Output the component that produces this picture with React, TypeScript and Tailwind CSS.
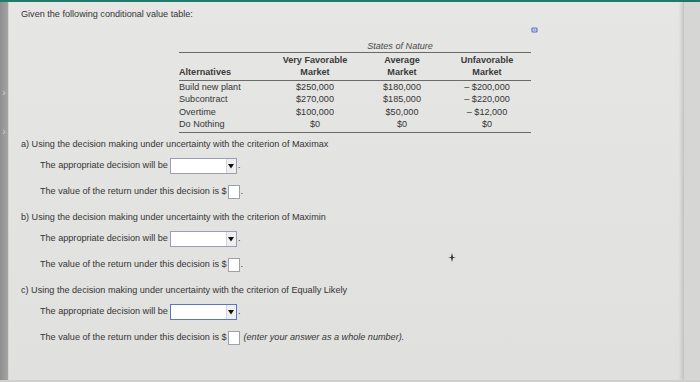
import React from 'react';

const rows = [
  { name: 'Build new plant', vf: '$250,000', avg: '$180,000', unf: '– $200,000' },
  { name: 'Subcontract', vf: '$270,000', avg: '$185,000', unf: '– $220,000' },
  { name: 'Overtime', vf: '$100,000', avg: '$50,000', unf: '– $12,000' },
  { name: 'Do Nothing', vf: '$0', avg: '$0', unf: '$0' },
];

function Dropdown({ focused }: { focused?: boolean }) {
  return (
    <div
      className={`flex h-[16px] w-[67px] bg-white border ${
        focused ? 'border-[#5877bd]' : 'border-[#9a9cb8]'
      }`}
    >
      <div className="flex-1" />
      <div className="w-[10px] flex items-center justify-center bg-[#efefef] border-l border-[#d6d6d6]">
        <svg width="6" height="6" viewBox="0 0 6 6">
          <path d="M0 1 L6 1 L3 5.5 Z" fill="#111" />
        </svg>
      </div>
    </div>
  );
}

function ValueBox() {
  return <div className="h-[14px] w-[12px] bg-white border border-[#a0a0a8]" />;
}

function Question({ label, tail }: { label: string; tail?: boolean }) {
  return (
    <>
      <div className="mt-[13px] h-[11px] leading-[11px]">{label}</div>
      <div className="mt-[7.5px] ml-[19px] flex items-center h-[16px]">
        <span className="mr-[2px]">The appropriate decision will be</span>
        <Dropdown focused={tail} />
        <span className="ml-[1px]">.</span>
      </div>
      <div className="mt-[11.5px] ml-[19px] flex items-center h-[14px]">
        <span className="mr-[1px]">The value of the return under this decision is $</span>
        <ValueBox />
        {tail ? (
          <span className="ml-[4px] italic">(enter your answer as a whole number).</span>
        ) : (
          <span className="ml-[1px]">.</span>
        )}
      </div>
    </>
  );
}

export default function App() {
  return (
    <div className="relative w-[700px] h-[382px] overflow-hidden bg-[#e2e2e0] text-[#353535] text-[9.1px] font-['Liberation_Sans',Arial,sans-serif] flex flex-col">
      <div className="h-[2px] bg-[#1e7c6a] shrink-0" />
      <div className="flex flex-1 min-h-0">
        {/* left edge of the window */}
        <div className="w-[9px] shrink-0 bg-gradient-to-r from-[#8f8f8f] to-[#a4a4a4] border-r border-[#d4d4d4] flex flex-col items-center text-[#d2d2d2] text-[10px] leading-[10px]">
          <span className="mt-[86px]">›</span>
          <span className="mt-[29px]">›</span>
        </div>

        <div className="flex-1 pl-[12px] pt-[7px] bg-gradient-to-b from-[#e6e6e4] to-[#e0e0de]">
          <div className="h-[11px] leading-[11px]">Given the following conditional value table:</div>

          {/* conditional value table */}
          <div className="relative ml-[158px] w-[352px] mt-[21px]">
            <svg className="absolute right-[-8px] top-[-14px]" width="8" height="7" viewBox="0 0 8 7">
              <rect x="1" y="1" width="5" height="4" rx="1" fill="none" stroke="#5a6fd0" strokeWidth="1.2" />
              <rect x="2.5" y="2.5" width="2" height="1" fill="#5a6fd0" />
            </svg>
            <div className="grid grid-cols-[90px_92px_82px_88px] h-[11px] leading-[11px]">
              <div />
              <div className="col-span-3 text-center italic text-[#4a4a4a]">States of Nature</div>
            </div>
            <div className="border-t border-[#6a6a6a]" />
            <div className="grid grid-cols-[90px_92px_82px_88px] pt-[2px] pb-[2px] leading-[11.5px] font-bold text-[#3a3a3a]">
              <div className="self-end">Alternatives</div>
              <div className="text-center">Very Favorable<br />Market</div>
              <div className="text-center">Average<br />Market</div>
              <div className="text-center">Unfavorable<br />Market</div>
            </div>
            <div className="border-t border-[#6a6a6a]" />
            <div className="pb-[1px]">
              {rows.map((r) => (
                <div key={r.name} className="grid grid-cols-[90px_92px_82px_88px] leading-[12.4px]">
                  <div>{r.name}</div>
                  <div className="text-center">{r.vf}</div>
                  <div className="text-center">{r.avg}</div>
                  <div className="text-center">{r.unf}</div>
                </div>
              ))}
            </div>
            <div className="border-t border-[#6a6a6a]" />
          </div>

          <div className="-mt-[6.5px]">
            <Question label="a) Using the decision making under uncertainty with the criterion of Maximax" />
            <Question label="b) Using the decision making under uncertainty with the criterion of Maximin" />
            <Question label="c) Using the decision making under uncertainty with the criterion of Equally Likely" tail />
          </div>
        </div>

        {/* right edge of the window */}
        <div className="w-[17px] shrink-0 bg-[#d6d6d4] border-l border-[#c4c4c2] shadow-[-2px_0_3px_rgba(0,0,0,0.12)]" />
      </div>
      <div className="h-[2px] bg-[#cfcfcd] shrink-0" />
      <svg className="absolute left-[448px] top-[253px]" width="8" height="9" viewBox="0 0 8 9">
        <path d="M4 0 L5 4 L8 4.5 L5 5 L4 9 L3 5 L0 4.5 L3 4 Z" fill="#333" />
      </svg>
    </div>
  );
}
